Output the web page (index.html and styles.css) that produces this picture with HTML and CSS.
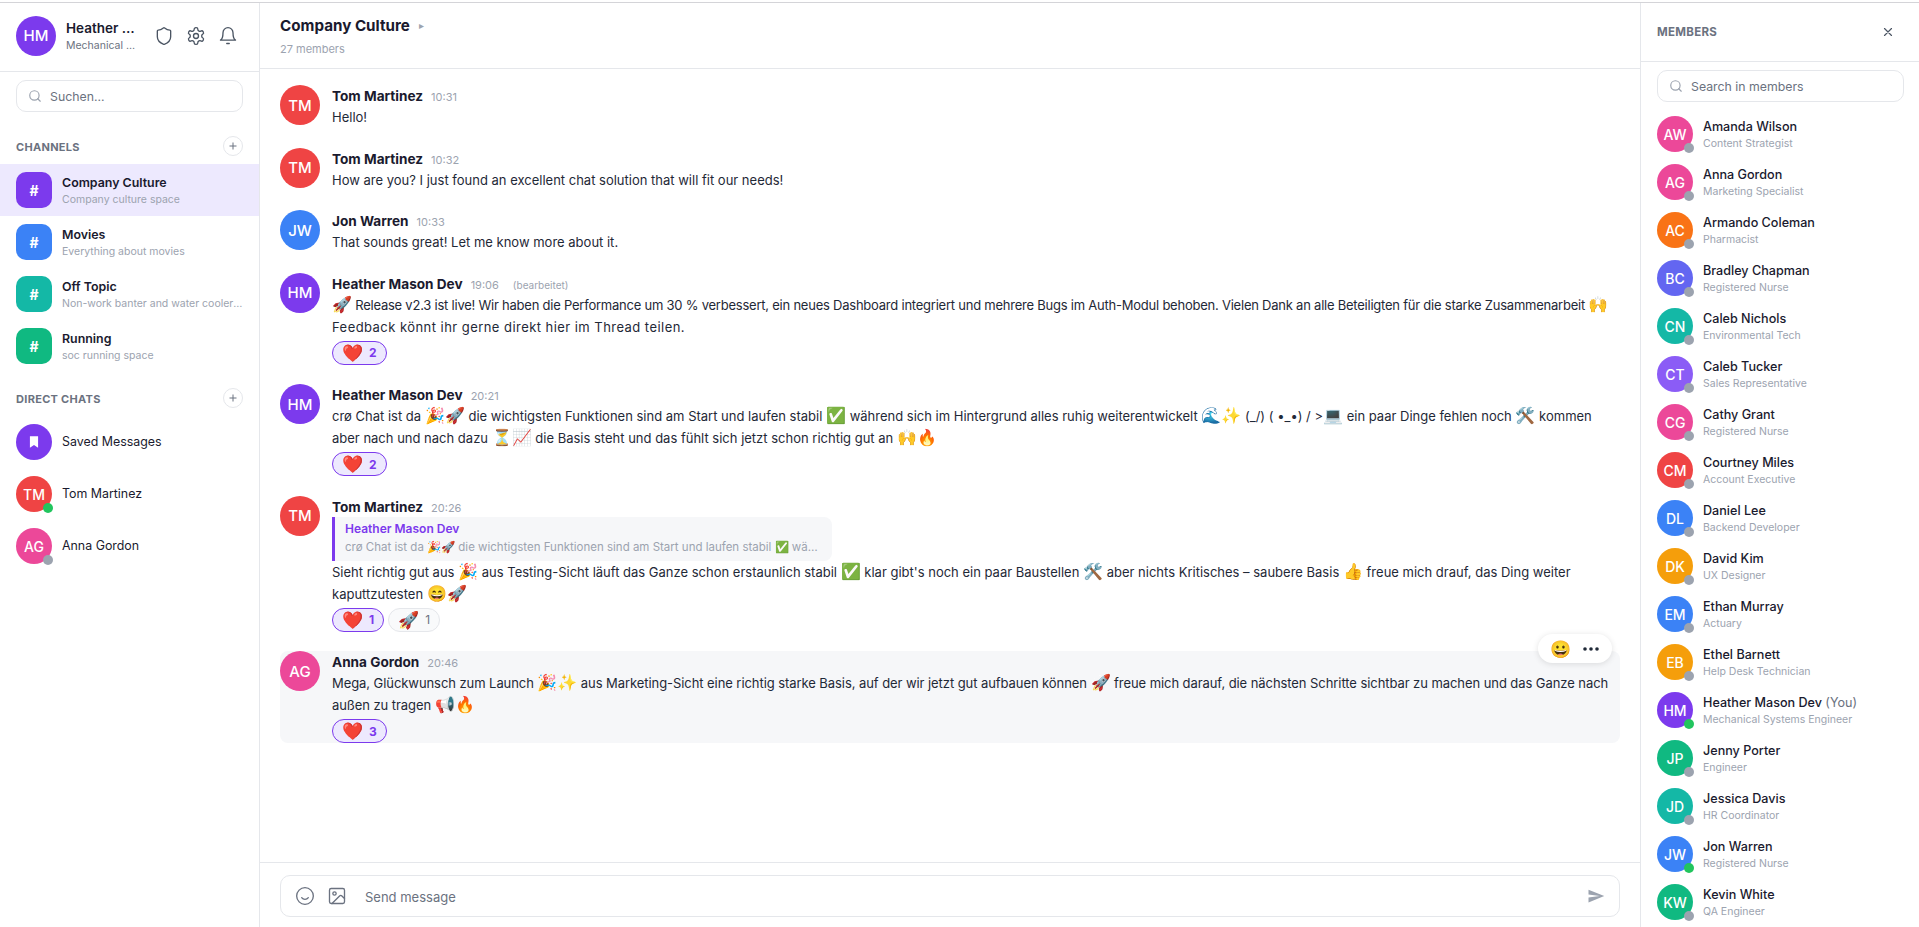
FILE: index.html
```html
<!DOCTYPE html>
<html lang="en">
<head>
  <meta charset="UTF-8">
  <meta name="viewport" content="width=device-width, initial-scale=1.0">
  <title>Company Culture</title>
  <link rel="stylesheet" href="styles.css">
</head>
<body>
  <div class="top-line"></div>
  <div class="app">

    <!-- left sidebar -->
    <aside class="sidebar">
      <div class="profile">
        <div class="avatar avatar-lg purple">HM</div>
        <div class="profile-text">
          <div class="profile-name">Heather Mason Dev</div>
          <div class="profile-role">Mechanical Systems Engineer</div>
        </div>
        <div class="profile-icons">
          <svg class="icon" viewBox="0 0 24 24"><path d="M20 13c0 5-3.5 7.5-7.66 8.95a1 1 0 0 1-.67-.01C7.5 20.5 4 18 4 13V6a1 1 0 0 1 1-1c2 0 4.5-1.2 6.24-2.72a1.17 1.17 0 0 1 1.52 0C14.51 3.81 17 5 19 5a1 1 0 0 1 1 1z"/></svg>
          <svg class="icon" viewBox="0 0 24 24"><path d="M12.22 2h-.44a2 2 0 0 0-2 2v.18a2 2 0 0 1-1 1.73l-.43.25a2 2 0 0 1-2 0l-.15-.08a2 2 0 0 0-2.73.73l-.22.38a2 2 0 0 0 .73 2.73l.15.1a2 2 0 0 1 1 1.72v.51a2 2 0 0 1-1 1.74l-.15.09a2 2 0 0 0-.73 2.73l.22.38a2 2 0 0 0 2.73.73l.15-.08a2 2 0 0 1 2 0l.43.25a2 2 0 0 1 1 1.73V20a2 2 0 0 0 2 2h.44a2 2 0 0 0 2-2v-.18a2 2 0 0 1 1-1.73l.43-.25a2 2 0 0 1 2 0l.15.08a2 2 0 0 0 2.73-.73l.22-.39a2 2 0 0 0-.73-2.73l-.15-.08a2 2 0 0 1-1-1.74v-.5a2 2 0 0 1 1-1.74l.15-.09a2 2 0 0 0 .73-2.73l-.22-.38a2 2 0 0 0-2.73-.73l-.15.08a2 2 0 0 1-2 0l-.43-.25a2 2 0 0 1-1-1.73V4a2 2 0 0 0-2-2z"/><circle cx="12" cy="12" r="3"/></svg>
          <svg class="icon" viewBox="0 0 24 24"><path d="M6 8a6 6 0 0 1 12 0c0 7 3 9 3 9H3s3-2 3-9"/><path d="M10.5 21h3"/></svg>
        </div>
      </div>

      <div class="search-box sidebar-search">
        <svg class="icon-sm" viewBox="0 0 24 24"><circle cx="11" cy="11" r="8"/><path d="m21 21-4.3-4.3"/></svg>
        <span>Suchen...</span>
      </div>

      <div class="section-head first">
        <span>CHANNELS</span>
        <span class="add-btn"><svg viewBox="0 0 24 24"><path d="M5 12h14M12 5v14"/></svg></span>
      </div>
      <div class="row active">
        <div class="avatar square purple">#</div>
        <div class="row-text"><div class="row-name">Company Culture</div><div class="row-sub">Company culture space</div></div>
      </div>
      <div class="row">
        <div class="avatar square blue">#</div>
        <div class="row-text"><div class="row-name">Movies</div><div class="row-sub">Everything about movies</div></div>
      </div>
      <div class="row">
        <div class="avatar square teal">#</div>
        <div class="row-text"><div class="row-name">Off Topic</div><div class="row-sub">Non-work banter and water cooler conversation</div></div>
      </div>
      <div class="row">
        <div class="avatar square emerald">#</div>
        <div class="row-text"><div class="row-name">Running</div><div class="row-sub">soc running space</div></div>
      </div>

      <div class="section-head">
        <span>DIRECT CHATS</span>
        <span class="add-btn"><svg viewBox="0 0 24 24"><path d="M5 12h14M12 5v14"/></svg></span>
      </div>
      <div class="row">
        <div class="avatar purple"><svg class="bookmark" viewBox="0 0 24 24"><path d="M5 2h14v20l-7-5-7 5z"/></svg></div>
        <div class="row-text"><div class="row-name plain">Saved Messages</div></div>
      </div>
      <div class="row">
        <div class="avatar red">TM<i class="dot online"></i></div>
        <div class="row-text"><div class="row-name plain">Tom Martinez</div></div>
      </div>
      <div class="row">
        <div class="avatar pink">AG<i class="dot"></i></div>
        <div class="row-text"><div class="row-name plain">Anna Gordon</div></div>
      </div>
    </aside>

    <!-- chat -->
    <main class="chat">
      <header class="chat-head">
        <div class="chat-title">Company Culture <span class="caret">&#9656;</span></div>
        <div class="chat-count">27 members</div>
      </header>

      <div class="messages">
        <div class="msg">
          <div class="avatar avatar-lg red">TM</div>
          <div class="msg-body">
            <div class="msg-meta"><span class="msg-name">Tom Martinez</span><span class="msg-time">10:31</span></div>
            <div class="msg-text">Hello!</div>
          </div>
        </div>
        <div class="msg">
          <div class="avatar avatar-lg red">TM</div>
          <div class="msg-body">
            <div class="msg-meta"><span class="msg-name">Tom Martinez</span><span class="msg-time">10:32</span></div>
            <div class="msg-text">How are you? I just found an excellent chat solution that will fit our needs!</div>
          </div>
        </div>
        <div class="msg">
          <div class="avatar avatar-lg blue">JW</div>
          <div class="msg-body">
            <div class="msg-meta"><span class="msg-name">Jon Warren</span><span class="msg-time">10:33</span></div>
            <div class="msg-text">That sounds great! Let me know more about it.</div>
          </div>
        </div>
        <div class="msg">
          <div class="avatar avatar-lg purple">HM</div>
          <div class="msg-body">
            <div class="msg-meta"><span class="msg-name">Heather Mason Dev</span><span class="msg-time">19:06</span><span class="msg-edited">(bearbeitet)</span></div>
            <div class="msg-text release"><span class="em">🚀</span> Release v2.3 ist live! Wir haben die Performance um 30 % verbessert, ein neues Dashboard integriert und mehrere Bugs im Auth-Modul behoben. Vielen Dank an alle Beteiligten für die starke Zusammenarbeit <span class="em">🙌</span> Feedback könnt ihr gerne direkt hier im Thread teilen.</div>
            <div class="reactions"><span class="reaction mine"><span class="emo">❤️</span> 2</span></div>
          </div>
        </div>
        <div class="msg">
          <div class="avatar avatar-lg purple">HM</div>
          <div class="msg-body">
            <div class="msg-meta"><span class="msg-name">Heather Mason Dev</span><span class="msg-time">20:21</span></div>
            <div class="msg-text">crø Chat ist da <span class="em">🎉🚀</span> die wichtigsten Funktionen sind am Start und laufen stabil <span class="em">✅</span> während sich im Hintergrund alles ruhig weiterentwickelt <span class="em">🌊✨</span> (_/) ( •_•) / &gt;<span class="em">💻</span> ein paar Dinge fehlen noch <span class="em">🛠️</span> kommen aber nach und nach dazu <span class="em">⏳📈</span> die Basis steht und das fühlt sich jetzt schon richtig gut an <span class="em">🙌🔥</span></div>
            <div class="reactions"><span class="reaction mine"><span class="emo">❤️</span> 2</span></div>
          </div>
        </div>
        <div class="msg">
          <div class="avatar avatar-lg red">TM</div>
          <div class="msg-body">
            <div class="msg-meta"><span class="msg-name">Tom Martinez</span><span class="msg-time">20:26</span></div>
            <div class="reply">
              <div class="reply-name">Heather Mason Dev</div>
              <div class="reply-text">crø Chat ist da 🎉🚀 die wichtigsten Funktionen sind am Start und laufen stabil ✅ während sich im Hintergrund</div>
            </div>
            <div class="msg-text">Sieht richtig gut aus <span class="em">🎉</span> aus Testing-Sicht läuft das Ganze schon erstaunlich stabil <span class="em">✅</span> klar gibt's noch ein paar Baustellen <span class="em">🛠️</span> aber nichts Kritisches – saubere Basis <span class="em">👍</span> freue mich drauf, das Ding weiter kaputtzutesten <span class="em">😄🚀</span></div>
            <div class="reactions">
              <span class="reaction mine"><span class="emo">❤️</span> 1</span>
              <span class="reaction"><span class="emo">🚀</span> 1</span>
            </div>
          </div>
        </div>
        <div class="msg hovered">
          <div class="avatar avatar-lg pink">AG</div>
          <div class="msg-body">
            <div class="msg-meta"><span class="msg-name">Anna Gordon</span><span class="msg-time">20:46</span></div>
            <div class="msg-text launch">Mega, Glückwunsch zum Launch <span class="em">🎉✨</span> aus Marketing-Sicht eine richtig starke Basis, auf der wir jetzt gut aufbauen können <span class="em">🚀</span> freue mich darauf, die nächsten Schritte sichtbar zu machen und das Ganze nach außen zu tragen <span class="em">📢🔥</span></div>
            <div class="reactions"><span class="reaction mine"><span class="emo">❤️</span> 3</span></div>
          </div>
          <div class="msg-tools">
            <span class="emo tool-emoji">😀</span>
            <svg class="tool-more" viewBox="0 0 18 4"><circle cx="3" cy="2" r="1.8"/><circle cx="9" cy="2" r="1.8"/><circle cx="15" cy="2" r="1.8"/></svg>
          </div>
        </div>
      </div>

      <div class="composer-wrap">
        <div class="composer">
          <svg class="icon composer-icon" viewBox="0 0 24 24"><circle cx="12" cy="12" r="10"/><path d="M8 14s1.5 2 4 2 4-2 4-2"/></svg>
          <svg class="icon composer-icon" viewBox="0 0 24 24"><rect x="3" y="3" width="18" height="18" rx="2"/><circle cx="9" cy="9" r="2"/><path d="m21 15-3.086-3.086a2 2 0 0 0-2.828 0L6 21"/></svg>
          <span class="composer-text">Send message</span>
          <svg class="send" viewBox="0 0 24 24"><path d="M2 20.5 23 12 2 3.5V10l15 2-15 2z"/></svg>
        </div>
      </div>
    </main>

    <!-- members -->
    <aside class="members">
      <div class="members-head">
        <span>MEMBERS</span>
        <svg class="icon-sm close" viewBox="0 0 24 24"><path d="M18 6 6 18M6 6l12 12"/></svg>
      </div>
      <div class="search-box members-search">
        <svg class="icon-sm" viewBox="0 0 24 24"><circle cx="11" cy="11" r="8"/><path d="m21 21-4.3-4.3"/></svg>
        <span>Search in members</span>
      </div>
      <div class="member-list">
        <div class="member"><div class="avatar pink">AW<i class="dot"></i></div><div class="member-text"><div class="member-name">Amanda Wilson</div><div class="member-role">Content Strategist</div></div></div>
        <div class="member"><div class="avatar pink">AG<i class="dot"></i></div><div class="member-text"><div class="member-name">Anna Gordon</div><div class="member-role">Marketing Specialist</div></div></div>
        <div class="member"><div class="avatar orange">AC<i class="dot"></i></div><div class="member-text"><div class="member-name">Armando Coleman</div><div class="member-role">Pharmacist</div></div></div>
        <div class="member"><div class="avatar indigo">BC<i class="dot"></i></div><div class="member-text"><div class="member-name">Bradley Chapman</div><div class="member-role">Registered Nurse</div></div></div>
        <div class="member"><div class="avatar teal">CN<i class="dot"></i></div><div class="member-text"><div class="member-name">Caleb Nichols</div><div class="member-role">Environmental Tech</div></div></div>
        <div class="member"><div class="avatar violet">CT<i class="dot"></i></div><div class="member-text"><div class="member-name">Caleb Tucker</div><div class="member-role">Sales Representative</div></div></div>
        <div class="member"><div class="avatar pink">CG<i class="dot"></i></div><div class="member-text"><div class="member-name">Cathy Grant</div><div class="member-role">Registered Nurse</div></div></div>
        <div class="member"><div class="avatar red">CM<i class="dot"></i></div><div class="member-text"><div class="member-name">Courtney Miles</div><div class="member-role">Account Executive</div></div></div>
        <div class="member"><div class="avatar blue">DL<i class="dot"></i></div><div class="member-text"><div class="member-name">Daniel Lee</div><div class="member-role">Backend Developer</div></div></div>
        <div class="member"><div class="avatar amber">DK<i class="dot"></i></div><div class="member-text"><div class="member-name">David Kim</div><div class="member-role">UX Designer</div></div></div>
        <div class="member"><div class="avatar blue">EM<i class="dot"></i></div><div class="member-text"><div class="member-name">Ethan Murray</div><div class="member-role">Actuary</div></div></div>
        <div class="member"><div class="avatar amber">EB<i class="dot"></i></div><div class="member-text"><div class="member-name">Ethel Barnett</div><div class="member-role">Help Desk Technician</div></div></div>
        <div class="member"><div class="avatar purple">HM<i class="dot online"></i></div><div class="member-text"><div class="member-name">Heather Mason Dev <span class="you">(You)</span></div><div class="member-role">Mechanical Systems Engineer</div></div></div>
        <div class="member"><div class="avatar emerald">JP<i class="dot"></i></div><div class="member-text"><div class="member-name">Jenny Porter</div><div class="member-role">Engineer</div></div></div>
        <div class="member"><div class="avatar teal">JD<i class="dot"></i></div><div class="member-text"><div class="member-name">Jessica Davis</div><div class="member-role">HR Coordinator</div></div></div>
        <div class="member"><div class="avatar blue">JW<i class="dot online"></i></div><div class="member-text"><div class="member-name">Jon Warren</div><div class="member-role">Registered Nurse</div></div></div>
        <div class="member"><div class="avatar emerald">KW<i class="dot"></i></div><div class="member-text"><div class="member-name">Kevin White</div><div class="member-role">QA Engineer</div></div></div>
      </div>
    </aside>
  </div>
</body>
</html>
```
FILE: styles.css
```css
* {
  margin: 0;
  padding: 0;
  box-sizing: border-box;
}

html, body {
  height: 100%;
  overflow: hidden;
}

body {
  font-family: 'Inter', 'Noto Sans', sans-serif;
  background: #ffffff;
  color: #1a1a2e;
  display: flex;
  flex-direction: column;
}

.top-line {
  height: 3px;
  flex-shrink: 0;
  border-bottom: 1px solid #d4d4d8;
}

.app {
  flex: 1;
  display: flex;
  min-height: 0;
}

/* Shared bits */
.icon {
  width: 20px;
  height: 20px;
  fill: none;
  stroke: #4b5563;
  stroke-width: 1.6;
  stroke-linecap: round;
  stroke-linejoin: round;
  flex-shrink: 0;
}

.icon-sm {
  width: 14px;
  height: 14px;
  fill: none;
  stroke: #9ca3af;
  stroke-width: 2;
  stroke-linecap: round;
  stroke-linejoin: round;
  flex-shrink: 0;
}

.avatar {
  width: 36px;
  height: 36px;
  border-radius: 50%;
  flex-shrink: 0;
  position: relative;
  display: flex;
  align-items: center;
  justify-content: center;
  color: #ffffff;
  font-size: 14px;
  font-weight: 500;
}

.avatar-lg {
  width: 40px;
  height: 40px;
  font-size: 15px;
}

.square {
  border-radius: 10px;
  font-size: 14px;
  font-weight: 700;
}

.purple { background: #7c3aed; }
.blue { background: #3b82f6; }
.teal { background: #14b8a6; }
.emerald { background: #10b981; }
.red { background: #ef4444; }
.pink { background: #ec4899; }
.orange { background: #f97316; }
.indigo { background: #6366f1; }
.violet { background: #8b5cf6; }
.amber { background: #f59e0b; }

.dot {
  position: absolute;
  right: -1px;
  bottom: -1px;
  width: 10px;
  height: 10px;
  border-radius: 50%;
  background: #9ca3af;
}

.dot.online {
  background: #22c55e;
}

.search-box {
  display: flex;
  align-items: center;
  gap: 8px;
  border: 1px solid #e5e7eb;
  border-radius: 10px;
  padding: 0 11px;
  font-size: 12.3px;
  color: #6b7280;
}

/* Left sidebar */
.sidebar {
  width: 260px;
  flex-shrink: 0;
  border-right: 1px solid #e5e7eb;
}

.profile {
  height: 69px;
  padding: 0 16px 3px;
  display: flex;
  align-items: center;
  gap: 10px;
  border-bottom: 1px solid #e5e7eb;
}

.profile-text {
  width: 75px;
  min-width: 0;
}

.profile-name {
  font-size: 13.5px;
  font-weight: 600;
  line-height: 20px;
  white-space: nowrap;
  overflow: hidden;
  text-overflow: ellipsis;
}

.profile-role {
  font-size: 10.5px;
  line-height: 16px;
  color: #6b7280;
  white-space: nowrap;
  overflow: hidden;
  text-overflow: ellipsis;
}

.profile-icons {
  display: flex;
  gap: 12px;
  margin-left: 3px;
}

.sidebar-search {
  height: 32px;
  margin: 8px 16px 0;
}

.section-head {
  margin: 16px 16px 8px;
  height: 20px;
  display: flex;
  align-items: center;
  justify-content: space-between;
  font-size: 11px;
  font-weight: 700;
  letter-spacing: 0.3px;
  color: #6b7280;
}

.section-head > span:first-child {
  padding-top: 2px;
}

.section-head.first {
  margin-top: 24px;
}

.add-btn {
  width: 20px;
  height: 20px;
  border: 1px solid #e5e7eb;
  border-radius: 50%;
  display: flex;
  align-items: center;
  justify-content: center;
}

.add-btn svg {
  width: 12px;
  height: 12px;
  fill: none;
  stroke: #6b7280;
  stroke-width: 2;
}

.row {
  height: 52px;
  padding: 0 16px;
  display: flex;
  align-items: center;
  gap: 10px;
}

.row.active {
  background: #ede9fe;
}

.row-text {
  min-width: 0;
  flex: 1;
}

.row-name {
  font-size: 12.4px;
  font-weight: 600;
  line-height: 18px;
}

.row-name.plain {
  font-weight: 400;
}

.row-sub {
  font-size: 10.5px;
  line-height: 15px;
  color: #9ca3af;
  white-space: nowrap;
  overflow: hidden;
  text-overflow: ellipsis;
}

.bookmark {
  width: 14px;
  height: 16px;
  fill: #ffffff;
}

/* Chat */
.chat {
  flex: 1;
  min-width: 0;
  display: flex;
  flex-direction: column;
}

.chat-head {
  height: 66px;
  flex-shrink: 0;
  padding: 11px 20px 0;
  border-bottom: 1px solid #e5e7eb;
}

.chat-title {
  font-size: 15.2px;
  font-weight: 700;
  line-height: 22px;
}

.caret {
  color: #9ca3af;
  font-size: 10px;
  font-weight: 400;
  margin-left: 6px;
  vertical-align: 2px;
}

.chat-count {
  font-size: 11px;
  line-height: 16px;
  margin-top: 4px;
  color: #9ca3af;
}

.messages {
  flex: 1;
  min-height: 0;
  padding: 16px 20px 0;
  display: flex;
  flex-direction: column;
  gap: 19.5px;
}

.msg {
  position: relative;
  display: flex;
  gap: 12px;
  border-radius: 8px;
}

.msg.hovered {
  background: #f6f7f9;
}

.msg-body {
  flex: 1;
  min-width: 0;
}

.msg-meta {
  display: flex;
  align-items: baseline;
  gap: 8px;
  height: 21px;
  line-height: 23px;
}

.msg-name {
  font-size: 13.6px;
  font-weight: 700;
}

.msg-time {
  font-size: 11px;
  color: #9ca3af;
}

.msg-edited {
  font-size: 10px;
  margin-left: 6px;
  color: #9ca3af;
}

.msg-text {
  font-size: 13px;
  line-height: 22px;
  color: #1f2937;
}

/* these two lines sit a bit differently in the design */
.release {
  letter-spacing: 0.45px;
}

.release::first-line {
  letter-spacing: -0.23px;
}

.launch {
  letter-spacing: -0.07px;
}

.em {
  font-size: 16px;
  line-height: 1;
}

.reply {
  width: 500px;
  height: 44px;
  border-left: 3px solid #7c3aed;
  border-radius: 0 8px 8px 0;
  background: #f6f7f9;
  padding: 3px 10px;
}

.reply-name {
  font-size: 12px;
  font-weight: 600;
  line-height: 18px;
  color: #7c3aed;
}

.reply-text {
  font-size: 11.5px;
  line-height: 18px;
  color: #9ca3af;
  white-space: nowrap;
  overflow: hidden;
  text-overflow: ellipsis;
}

.reactions {
  display: flex;
  gap: 4px;
  margin-top: 3px;
}

.reaction {
  height: 24px;
  padding: 0 9px;
  display: flex;
  align-items: center;
  gap: 6px;
  border: 1px solid #e5e7eb;
  border-radius: 12px;
  background: #f9fafb;
  font-size: 12px;
  color: #6b7280;
}

.reaction.mine {
  border-color: #7c3aed;
  background: #ede9fe;
  color: #7c3aed;
  font-weight: 700;
}

.reaction .emo {
  font-size: 17px;
}

.msg-tools {
  position: absolute;
  top: -17px;
  right: 8px;
  width: 74px;
  height: 29px;
  display: flex;
  align-items: center;
  justify-content: space-between;
  padding: 0 12px;
  border-radius: 15px;
  background: #ffffff;
  box-shadow: 0 1px 6px rgba(0, 0, 0, 0.12);
}

.tool-emoji {
  font-size: 17px;
}

.tool-more {
  width: 18px;
  height: 4px;
  fill: #1f2937;
}

.composer-wrap {
  flex-shrink: 0;
  height: 65px;
  padding: 12px 20px 0;
  border-top: 1px solid #e5e7eb;
}

.composer {
  height: 42px;
  display: flex;
  align-items: center;
  gap: 12px;
  padding: 0 14px;
  border: 1px solid #e5e7eb;
  border-radius: 10px;
}

.composer-icon {
  stroke: #6b7280;
}

.composer-text {
  flex: 1;
  font-size: 13px;
  color: #6b7280;
  margin-left: 6px;
  padding-top: 2px;
}

.send {
  width: 18px;
  height: 18px;
  fill: #9ca3af;
}

/* Members */
.members {
  width: 279px;
  flex-shrink: 0;
  border-left: 1px solid #e5e7eb;
  overflow: hidden;
}

.members-head {
  height: 59px;
  padding: 0 24px 0 16px;
  display: flex;
  align-items: center;
  justify-content: space-between;
  border-bottom: 1px solid #e5e7eb;
  font-size: 11.5px;
  font-weight: 700;
  letter-spacing: 0.3px;
  color: #6b7280;
}

.close {
  stroke: #4b5563;
}

.members-search {
  height: 32px;
  margin: 8px 15px 0 16px;
}

.member-list {
  padding: 14px 16px 0;
  display: flex;
  flex-direction: column;
  gap: 12px;
}

.member {
  display: flex;
  align-items: center;
  gap: 10px;
}

.member-text {
  min-width: 0;
  flex: 1;
  padding-top: 2px;
}

.member-name {
  font-size: 12.6px;
  font-weight: 500;
  line-height: 18px;
}

.member-role {
  font-size: 10.5px;
  line-height: 16px;
  color: #9ca3af;
}

.you {
  font-weight: 400;
  color: #6b7280;
}
```
